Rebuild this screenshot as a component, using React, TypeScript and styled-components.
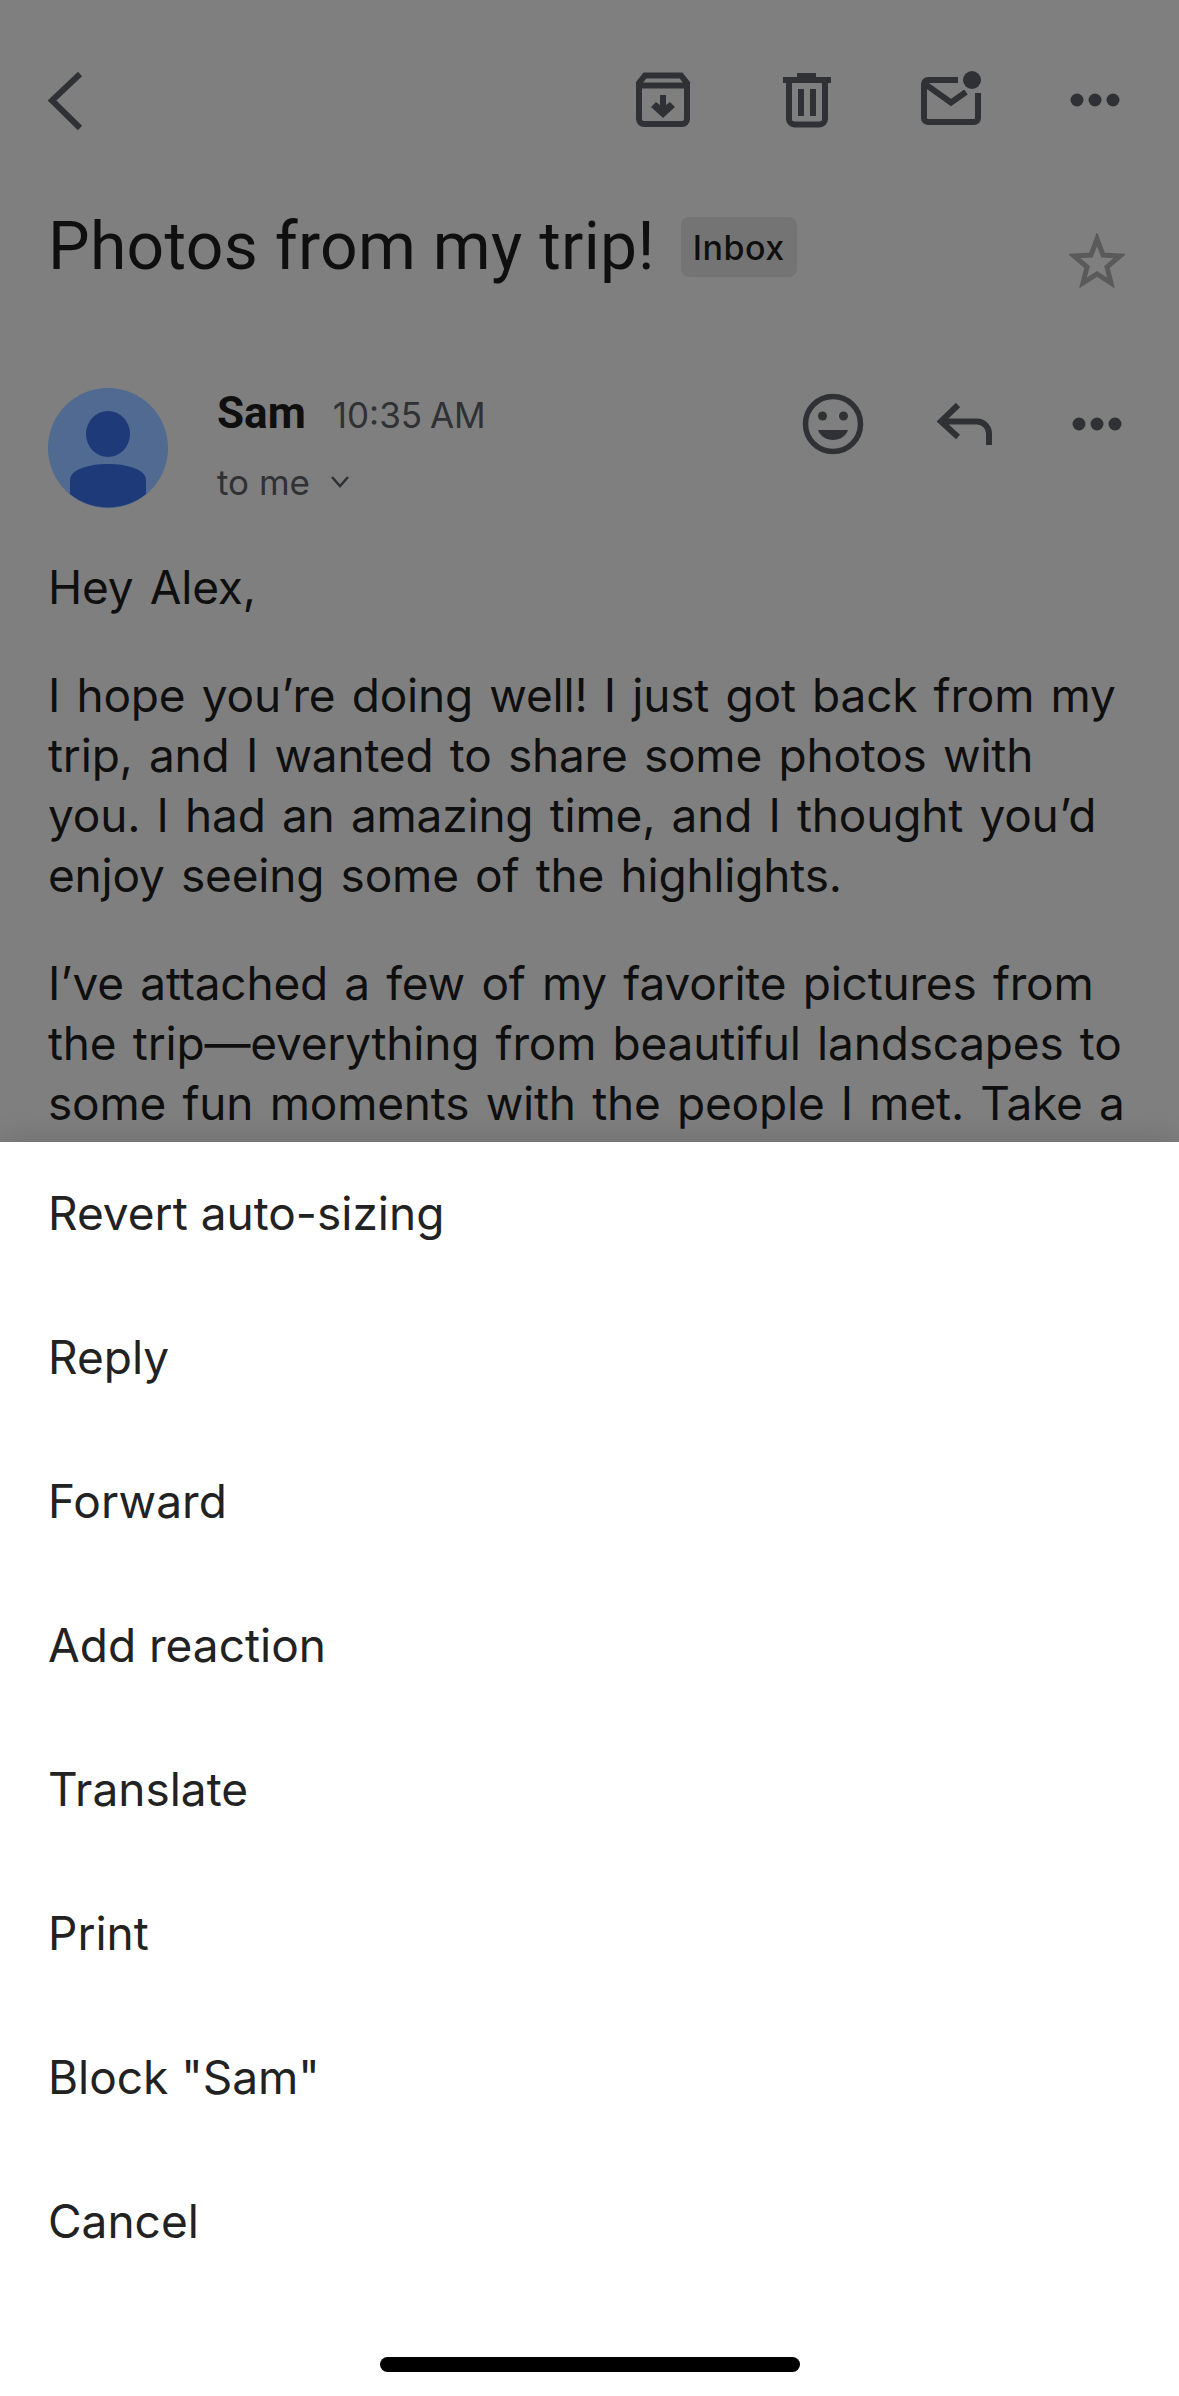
import styled, { createGlobalStyle } from "styled-components"

const GlobalStyle = createGlobalStyle`
  html, body {
    margin: 0;
    padding: 0;
    background: #ffffff;
  }
  body {
    font-family: "Inter", "Liberation Sans", sans-serif;
  }
`

const menuItems = [
  "Revert auto-sizing",
  "Reply",
  "Forward",
  "Add reaction",
  "Translate",
  "Print",
  'Block "Sam"',
  "Cancel",
]

const BackIcon = () => (
  <Icon viewBox="0 0 72 72">
    <path d="M50 10 L22 36.5 L50 64" fill="none" stroke="#5f6368" strokeWidth="6" />
  </Icon>
)

const ArchiveIcon = () => (
  <Icon viewBox="0 0 72 72">
    <path
      d="M18 11.5H54L60 19V55a5 5 0 0 1-5 5H17a5 5 0 0 1-5-5V19Z M12 21.5H60"
      fill="none"
      stroke="#5f6368"
      strokeWidth="6"
    />
    <path d="M33 31h6v10l4-3 5 5-12 11-12-11 5-5 4 3z" fill="#5f6368" />
  </Icon>
)

const TrashIcon = () => (
  <Icon viewBox="0 0 72 72">
    <path
      d="M26 9h19v4h15v6H12v-6h14z M27 25h6v27h-6z M39 25h6v27h-6z"
      fill="#5f6368"
    />
    <path
      d="M18 16V55a5.5 5.5 0 0 0 5.500 5.500H48.500A5.500 5.500 0 0 0 54 55V16"
      fill="none"
      stroke="#5f6368"
      strokeWidth="6"
    />
  </Icon>
)

const MailIcon = () => (
  <Icon viewBox="0 0 72 72">
    <path
      d="M43 16H13a4 4 0 0 0-4 4V54a4 4 0 0 0 4 4H59a4 4 0 0 0 4-4V29 M10 20L36 38.500L51 28"
      fill="none"
      stroke="#5f6368"
      strokeWidth="6"
    />
    <circle cx="57" cy="16" r="9" fill="#5f6368" />
  </Icon>
)

const DotsIcon = () => (
  <Icon viewBox="0 0 72 72">
    <circle cx="18" cy="36" r="6.500" fill="#5f6368" />
    <circle cx="36" cy="36" r="6.500" fill="#5f6368" />
    <circle cx="54" cy="36" r="6.500" fill="#5f6368" />
  </Icon>
)

const SmileIcon = () => (
  <Icon viewBox="0 0 72 72">
    <circle cx="36" cy="36" r="27.500" fill="none" stroke="#5f6368" strokeWidth="5.500" />
    <circle cx="25.500" cy="28" r="4.500" fill="#5f6368" />
    <circle cx="46.500" cy="28" r="4.500" fill="#5f6368" />
    <path d="M21 42H51C49 48 43 52 36 52S23 48 21 42Z" fill="#5f6368" />
  </Icon>
)

const ReplyIcon = () => (
  <Icon viewBox="0 0 72 72">
    <path
      d="M29 17L12 33.500L29 49 M12 33.500H48a12 12 0 0 1 12 12V57"
      fill="none"
      stroke="#5f6368"
      strokeWidth="6"
    />
  </Icon>
)

const StarIcon = () => (
  <StarSvg viewBox="0 0 56 56">
    <path
      d="M28 6 L34 22 L51 23 L38 34 L42 50 L28 41 L14 50 L18 34 L5 23 L22 22 Z"
      fill="none"
      stroke="#b4b4b4"
      strokeWidth="5"
    />
  </StarSvg>
)

const AvatarFigure = () => (
  <AvatarSvg viewBox="0 0 120 120">
    <circle cx="60" cy="60" r="60" fill="#506a92" />
    <ellipse cx="60" cy="46" rx="22" ry="23" fill="#1f3a78" />
    <path
      d="M22 92C22 82 40 76 60 76S98 82 98 92V106A60 60 0 0 1 22 106Z"
      fill="#1f3a78"
    />
  </AvatarSvg>
)

const App = () => {
  return (
    <Screen>
      <GlobalStyle />
      <EmailView>
        <Toolbar>
          <BackSlot>
            <BackIcon />
          </BackSlot>
          <ActionGroup>
            <IconSlot $width={144}>
              <ArchiveIcon />
            </IconSlot>
            <IconSlot $width={144}>
              <TrashIcon />
            </IconSlot>
            <IconSlot $width={144}>
              <MailIcon />
            </IconSlot>
            <IconSlot $width={144}>
              <DotsIcon />
            </IconSlot>
          </ActionGroup>
        </Toolbar>
        <SubjectRow>
          <Subject>Photos from my trip!</Subject>
          <InboxChip>Inbox</InboxChip>
          <StarSlot>
            <StarIcon />
          </StarSlot>
        </SubjectRow>
        <SenderRow>
          <AvatarFigure />
          <SenderInfo>
            <SenderTop>
              <SenderName>Sam</SenderName>
              <SentTime>10:35 AM</SentTime>
            </SenderTop>
            <Recipient>
              to me
              <ChevronSvg viewBox="0 0 20 14">
                <path d="M2 2L10 11L18 2" fill="none" stroke="#5f6368" strokeWidth="2.500" />
              </ChevronSvg>
            </Recipient>
          </SenderInfo>
          <ActionGroup>
            <IconSlot $width={132}>
              <SmileIcon />
            </IconSlot>
            <IconSlot $width={132}>
              <ReplyIcon />
            </IconSlot>
            <IconSlot $width={132}>
              <DotsIcon />
            </IconSlot>
          </ActionGroup>
        </SenderRow>
        <MessageBody>
          <Paragraph>Hey Alex,</Paragraph>
          <Paragraph>
            I hope you’re doing well! I just got back from my trip, and I wanted to share some
            photos with you. I had an amazing time, and I thought you’d enjoy seeing some of the
            highlights.
          </Paragraph>
          <Paragraph>
            I’ve attached a few of my favorite pictures from the trip—everything from beautiful
            landscapes to some fun moments with the people I met. Take a
          </Paragraph>
        </MessageBody>
      </EmailView>
      <Scrim />
      <ActionSheet>
        {menuItems.map((item) => (
          <MenuRow key={item}>{item}</MenuRow>
        ))}
        <HomeIndicator />
      </ActionSheet>
    </Screen>
  )
}

const Screen = styled.div`
  position: relative;
  width: 1179px;
  height: 2396px;
  overflow: hidden;
  background: #ffffff;
`

const EmailView = styled.div`
  display: flex;
  flex-direction: column;
`

const Icon = styled.svg`
  display: block;
  width: 72px;
  height: 72px;
`

const Toolbar = styled.div`
  display: flex;
  justify-content: space-between;
  padding: 64px 12px 0 30px;
`

const BackSlot = styled.div`
  width: 72px;
  height: 72px;
`

const ActionGroup = styled.div`
  display: flex;
  margin-left: auto;
`

const IconSlot = styled.div<{ $width: number }>`
  display: flex;
  justify-content: center;
  width: ${(p) => p.$width}px;
  height: 72px;
`

const SubjectRow = styled.div`
  display: flex;
  align-items: flex-start;
  padding: 75px 54px 0 48px;
`

const Subject = styled.h1`
  margin: -4px 0 0;
  font-family: "Roboto", sans-serif;
  font-size: 66px;
  font-weight: 400;
  line-height: 80px;
  letter-spacing: 0.3px;
  color: #1f1f1f;
`

const InboxChip = styled.span`
  display: flex;
  align-items: center;
  height: 60px;
  margin: 6px 0 0 26px;
  padding: 0 12px;
  border-radius: 8px;
  background: #e9e9e9;
  font-size: 34px;
  font-weight: 500;
  letter-spacing: 0.5px;
  color: #1f1f1f;
`

const StarSlot = styled.div`
  margin: 22px 0 0 auto;
`

const StarSvg = styled.svg`
  display: block;
  width: 56px;
  height: 56px;
`

const SenderRow = styled.div`
  display: flex;
  align-items: flex-start;
  padding: 99px 16px 0 48px;
`

const AvatarSvg = styled.svg`
  position: relative;
  z-index: 1;
  display: block;
  flex: none;
  width: 120px;
  height: 120px;
`

const SenderInfo = styled.div`
  display: flex;
  flex-direction: column;
  gap: 23px;
  margin-left: 49px;
`

const SenderTop = styled.div`
  display: flex;
  align-items: baseline;
  gap: 27px;
`

const SenderName = styled.span`
  font-family: "Roboto", sans-serif;
  font-size: 44px;
  font-weight: 700;
  line-height: 50px;
  color: #1f1f1f;
`

const SentTime = styled.span`
  font-family: "Inter", sans-serif;
  font-size: 35px;
  word-spacing: -2px;
  color: #5f6368;
`

const Recipient = styled.div`
  display: flex;
  align-items: center;
  gap: 20px;
  font-size: 35px;
  line-height: 42px;
  color: #5f6368;
`

const ChevronSvg = styled.svg`
  display: block;
  width: 20px;
  height: 14px;
`

const MessageBody = styled.div`
  display: flex;
  flex-direction: column;
  gap: 48px;
  margin-top: 49px;
  padding: 0 48px;
`

const Paragraph = styled.p`
  margin: 0;
  font-size: 46px;
  line-height: 60px;
  letter-spacing: -0.2px;
  word-spacing: 3.6px;
  color: #1f1f1f;
`

const Scrim = styled.div`
  position: absolute;
  inset: 0;
  background: rgba(0, 0, 0, 0.5);
`

const ActionSheet = styled.div`
  position: absolute;
  top: 1142px;
  right: 0;
  bottom: 0;
  left: 0;
  z-index: 2;
  display: flex;
  flex-direction: column;
  background: #ffffff;
  box-shadow: 0 -2px 30px rgba(0, 0, 0, 0.14);
`

const MenuRow = styled.div`
  display: flex;
  flex: none;
  align-items: center;
  box-sizing: border-box;
  height: 144px;
  padding: 0 48px 2px;
  font-size: 46px;
  color: #222222;
`

const HomeIndicator = styled.div`
  position: absolute;
  bottom: 24px;
  left: 380px;
  width: 420px;
  height: 15px;
  border-radius: 8px;
  background: #000000;
`

export default App
